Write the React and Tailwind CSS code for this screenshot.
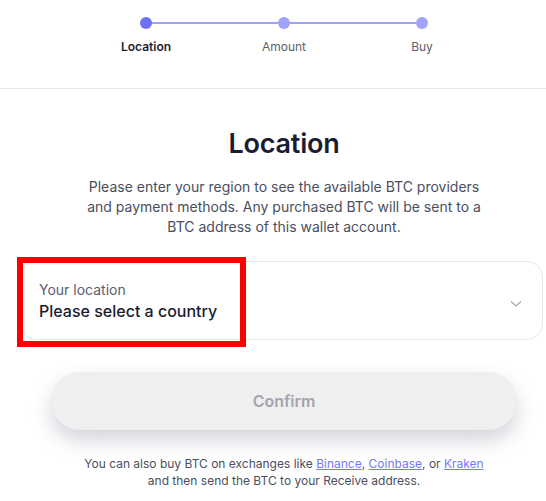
import React from "react";

export default function App() {
  return (
    <div className="w-[546px] h-[501px] bg-white overflow-hidden relative" style={{ fontFamily: "Inter, 'Noto Sans', sans-serif" }}>
      {/* Stepper */}
      <div className="h-[89px] border-b border-[#e5e5e7] pt-[17px] pl-[106px]">
        <div className="w-[356px] flex flex-col">
          <div className="flex items-center px-[34px]">
            <div className="w-[12px] h-[12px] rounded-full bg-[#6e71f6]" />
            <div className="flex-1 h-[2px] bg-[#9da0f8]" />
            <div className="w-[12px] h-[12px] rounded-full bg-[#a0a3f8]" />
            <div className="flex-1 h-[2px] bg-[#9da0f8]" />
            <div className="w-[12px] h-[12px] rounded-full bg-[#a0a3f8]" />
          </div>
          <div className="flex justify-between mt-[10px] text-[12px] leading-[16px] px-[2px]">
            <span className="w-[76px] text-center font-semibold text-[#1c1d2e]">Location</span>
            <span className="w-[76px] text-center text-[#5b5e6e]">Amount</span>
            <span className="w-[76px] text-center text-[#5b5e6e]">Buy</span>
          </div>
        </div>
      </div>

      <div className="w-[568px] flex flex-col items-center">
        <h1 className="mt-[38px] text-[27px] leading-[34px] font-semibold text-[#1b1c30] tracking-[-0.2px]">Location</h1>
        <p className="mt-[16px] w-[404px] text-center text-[14px] leading-[20px] text-[#4b4e5e]">
          Please enter your region to see the available BTC providers and payment methods. Any purchased BTC will be sent to a BTC address of this wallet account.
        </p>
      </div>

      {/* Select */}
      <div className="ml-[20px] mr-[3px] mt-[24px] h-[79px] rounded-[16px] border border-[#e7e7ea] flex items-center justify-between pl-[18px] pr-[20px]">
        <div className="flex flex-col">
          <span className="text-[14px] leading-[18px] text-[#5b5e6e]">Your location</span>
          <span className="mt-[2px] text-[16px] leading-[20px] font-[480] text-[#1b1c30]">Please select a country</span>
        </div>
        <svg width="12" height="8" viewBox="0 0 12 8" fill="none" className="mt-[6px]">
          <path d="M1 1.5 L6 6 L11 1.5" stroke="#a3a5b3" strokeWidth="1.1" />
        </svg>
      </div>

      {/* red highlight */}
      <div className="absolute left-[17px] top-[257px] w-[229px] h-[90px] border-[6px] border-[#ff0000] pointer-events-none" />

      {/* Button */}
      <div className="w-[568px] mt-[32px] flex justify-center">
        <button className="w-[466px] h-[58px] rounded-full bg-[#efeff0] text-[16px] font-semibold text-[#a3a4ab] shadow-[0_10px_20px_rgba(110,112,135,0.3)]">
          Confirm
        </button>
      </div>

      <p className="w-[568px] mt-[25px] text-center text-[12px] leading-[17px] text-[#4b4e5e]">
        You can also buy BTC on exchanges like{" "}
        <a className="text-[#7478f5] underline">Binance</a>,{" "}
        <a className="text-[#7478f5] underline">Coinbase</a>, or{" "}
        <a className="text-[#7478f5] underline">Kraken</a>
        <br />
        and then send the BTC to your Receive address.
      </p>
    </div>
  );
}
